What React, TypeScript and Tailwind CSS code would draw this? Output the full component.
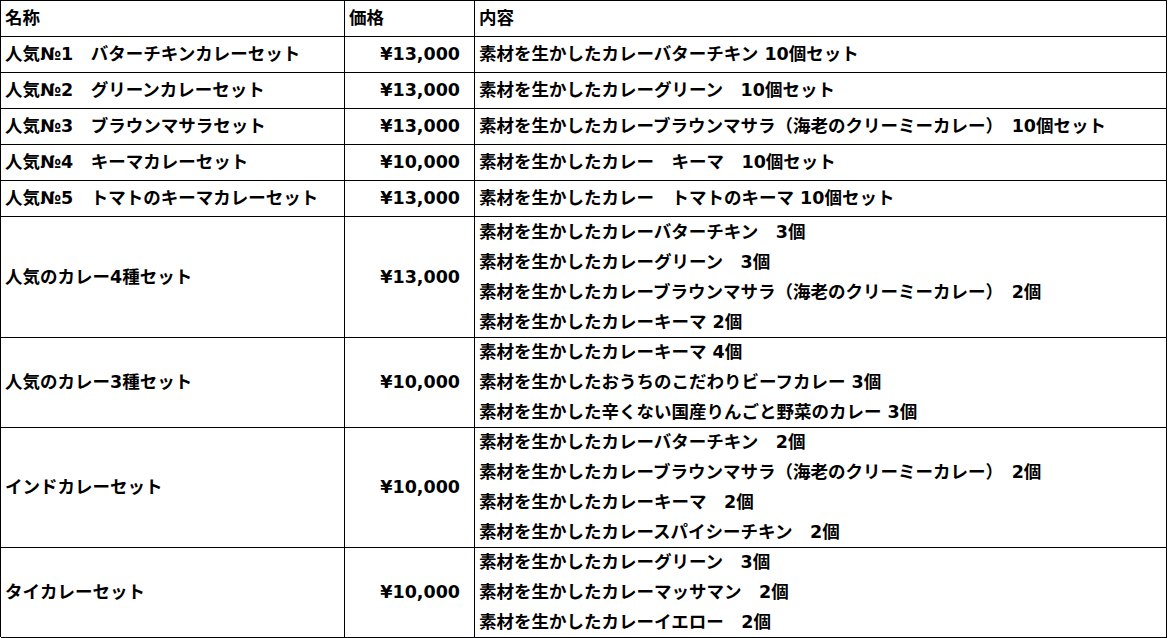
import React from "react";

type Row = { name: string; price: string; items: string[] };

const rows: Row[] = [
  { name: "人気№1　バターチキンカレーセット", price: "¥13,000", items: ["素材を生かしたカレーバターチキン 10個セット"] },
  { name: "人気№2　グリーンカレーセット", price: "¥13,000", items: ["素材を生かしたカレーグリーン　10個セット"] },
  { name: "人気№3　ブラウンマサラセット", price: "¥13,000", items: ["素材を生かしたカレーブラウンマサラ（海老のクリーミーカレー）　10個セット"] },
  { name: "人気№4　キーマカレーセット", price: "¥10,000", items: ["素材を生かしたカレー　キーマ　10個セット"] },
  { name: "人気№5　トマトのキーマカレーセット", price: "¥13,000", items: ["素材を生かしたカレー　トマトのキーマ 10個セット"] },
  {
    name: "人気のカレー4種セット",
    price: "¥13,000",
    items: [
      "素材を生かしたカレーバターチキン　3個",
      "素材を生かしたカレーグリーン　3個",
      "素材を生かしたカレーブラウンマサラ（海老のクリーミーカレー）　2個",
      "素材を生かしたカレーキーマ 2個",
    ],
  },
  {
    name: "人気のカレー3種セット",
    price: "¥10,000",
    items: [
      "素材を生かしたカレーキーマ 4個",
      "素材を生かしたおうちのこだわりビーフカレー 3個",
      "素材を生かした辛くない国産りんごと野菜のカレー 3個",
    ],
  },
  {
    name: "インドカレーセット",
    price: "¥10,000",
    items: [
      "素材を生かしたカレーバターチキン　2個",
      "素材を生かしたカレーブラウンマサラ（海老のクリーミーカレー）　2個",
      "素材を生かしたカレーキーマ　2個",
      "素材を生かしたカレースパイシーチキン　2個",
    ],
  },
  {
    name: "タイカレーセット",
    price: "¥10,000",
    items: [
      "素材を生かしたカレーグリーン　3個",
      "素材を生かしたカレーマッサマン　2個",
      "素材を生かしたカレーイエロー　2個",
    ],
  },
];

const cell = "flex items-center border-r border-b border-black";

export default function App() {
  return (
    <div className="h-[638px] w-[1168px] overflow-hidden bg-white font-['DejaVu_Sans','Noto_Sans_CJK_JP',sans-serif] text-[17.5px] font-bold text-black">
      <div className="w-[1167px] border-t border-l border-black">
        {/* 見出し */}
        <div className="grid h-[36px] grid-cols-[344px_130px_692px]">
          <div className={`${cell} px-[4px]`}>名称</div>
          <div className={`${cell} px-[4px]`}>価格</div>
          <div className={`${cell} px-[4px]`}>内容</div>
        </div>
        {rows.map((r) => (
          <div
            key={r.name}
            className={`grid grid-cols-[344px_130px_692px] ${
              r.items.length === 4 ? "h-[120px]" : r.items.length === 3 ? "h-[90px]" : "h-[36px]"
            }`}
          >
            <div className={`${cell} whitespace-pre px-[4px]`}>{r.name}</div>
            <div className={`${cell} justify-end pr-[14px]`}>{r.price}</div>
            <div className={`${cell} flex-col !items-start justify-center px-[4px]`}>
              {r.items.length > 1 ? (
                r.items.map((it) => (
                  <div key={it} className="flex h-[30px] shrink-0 items-center whitespace-pre">
                    {it}
                  </div>
                ))
              ) : (
                <div className="whitespace-pre">{r.items[0]}</div>
              )}
            </div>
          </div>
        ))}
      </div>
    </div>
  );
}
